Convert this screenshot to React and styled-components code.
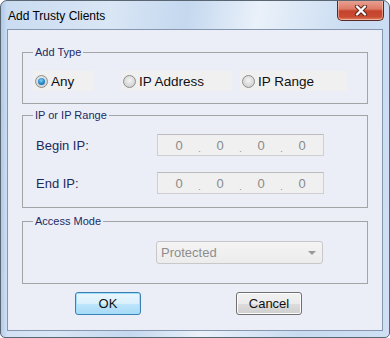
import React from 'react';
import styled, { createGlobalStyle } from 'styled-components';

const GlobalStyle = createGlobalStyle`
  html, body {
    margin: 0;
    padding: 0;
    background: #ffffff;
  }
  body {
    font-family: "Liberation Sans", Arial, sans-serif;
  }
`;

// Window frame
const Window = styled.div`
  box-sizing: border-box;
  width: 390px;
  height: 338px;
  border: 1px solid #5b6673;
  border-radius: 7px 7px 5px 5px;
  background:
    linear-gradient(to right, rgba(150,185,225,0.55) 0, rgba(150,185,225,0) 6px),
    linear-gradient(100deg, #c9dbf1 0%, #d9e6f5 25%, #c4d8ef 42%, #eaf1fa 58%, #c8dbf1 80%, #cfe0f4 100%);
  display: flex;
  flex-direction: column;
  overflow: hidden;
`;

const TitleBar = styled.div`
  height: 28px;
  display: flex;
  align-items: flex-start;
  justify-content: space-between;
  padding-left: 7px;
`;

const Title = styled.span`
  align-self: center;
  margin-top: 1px;
  font-size: 12px;
  color: #000;
`;

const CloseButton = styled.div`
  box-sizing: border-box;
  width: 47px;
  height: 21px;
  margin-top: -1px;
  margin-right: 5px;
  border: 1px solid #5a2a22;
  border-top: none;
  border-radius: 0 0 5px 5px;
  background: linear-gradient(#e9a597 0%, #dd7a66 45%, #c5432b 55%, #c94c31 85%, #e08a6c 100%);
  box-shadow: inset 0 0 0 1px rgba(255,220,210,0.5);
  display: flex;
  align-items: center;
  justify-content: center;
`;

const Client = styled.div`
  box-sizing: border-box;
  flex: 1;
  margin: 0 6px 6px 6px;
  border: 1px solid #8596ae;
  background: #ebeef7;
  padding: 16px 14px 0 14px;
  display: flex;
  flex-direction: column;
`;

// Group box
const Group = styled.fieldset`
  margin: ${p => p.$mt || 0}px 0 0 0;
  padding: 0;
  border: 1px solid #a2a4a8;
  min-width: 0;
`;

const Legend = styled.legend`
  margin-left: 10px;
  padding: 0 2px;
  font-size: 11px;
  line-height: 12px;
  color: #1d2a63;
`;

const GroupBody = styled.div`
  padding: ${p => p.$pt}px 0 ${p => p.$pb}px ${p => p.$pl}px;
`;

const RadioRow = styled.div`
  display: flex;
  align-items: center;
`;

const RadioItem = styled.label`
  box-sizing: border-box;
  width: ${p => p.$w}px;
  margin-left: ${p => p.$ml}px;
  height: 20px;
  background: #f0f0f1;
  display: flex;
  align-items: center;
  padding-left: 2px;
  gap: 3px;
  font-size: 13.5px;
  color: #111;
`;

const RadioCircle = styled.span`
  box-sizing: border-box;
  width: 13px;
  height: 13px;
  border-radius: 50%;
  border: 1px solid #8c8e90;
  background: radial-gradient(circle at 50% 40%, #f4f4f4 0%, #d4d4d4 70%, #c8c8c8 100%);
  display: flex;
  align-items: center;
  justify-content: center;
  &::after {
    content: "";
    width: 7px;
    height: 7px;
    border-radius: 50%;
    display: ${p => (p.$checked ? 'block' : 'none')};
    background: radial-gradient(circle at 45% 35%, #7fd2f7 0%, #2a8ccd 50%, #104f8a 100%);
  }
`;

const FieldGrid = styled.div`
  display: grid;
  grid-template-columns: 121px 167px;
  row-gap: 16px;
  align-items: center;
`;

const FieldLabel = styled.span`
  font-size: 13px;
  color: #1d2a5e;
`;

const IpBox = styled.div`
  box-sizing: border-box;
  height: 22px;
  border: 1px solid #cfcfd1;
  border-top-color: #bcbcbe;
  background: #f0f0f0;
  display: flex;
  align-items: center;
  padding-left: 11px;
  font-size: 13px;
  color: #8a8a8a;
`;

const Octet = styled.span`
  width: 20px;
  text-align: center;
`;

const Dot = styled.span`
  width: 21px;
  text-align: center;
  font-size: 9px;
  padding-top: 7px;
`;

const Select = styled.div`
  box-sizing: border-box;
  width: 167px;
  height: 23px;
  margin-left: 133px;
  border: 1px solid #c8c8ca;
  border-radius: 3px;
  background: linear-gradient(#f4f4f4, #ececec);
  display: flex;
  align-items: center;
  justify-content: space-between;
  padding: 0 6px 0 4px;
  font-size: 13px;
  color: #8d8d8d;
`;

const Arrow = styled.span`
  width: 0;
  height: 0;
  border-left: 4px solid transparent;
  border-right: 4px solid transparent;
  border-top: 4px solid #9a9a9a;
`;

const ButtonRow = styled.div`
  display: flex;
  gap: 95px;
  padding-left: 53px;
  margin-top: 8px;
`;

const Button = styled.button`
  box-sizing: border-box;
  width: 66px;
  height: 23px;
  border-radius: 3px;
  font-family: "Liberation Sans", Arial, sans-serif;
  font-size: 13px;
  color: #111;
  padding: 0;
  border: 1px solid ${p => (p.$default ? '#3c7fb1' : '#707070')};
  background: ${p =>
    p.$default
      ? 'linear-gradient(#eaf6fd 0%, #d9f0fc 50%, #bee6fd 51%, #a7d9f5 100%)'
      : 'linear-gradient(#f2f2f2 0%, #ebebeb 50%, #dddddd 51%, #cfcfcf 100%)'};
  box-shadow: inset 0 0 0 1px ${p => (p.$default ? '#9ee0fb' : '#fcfcfc')};
`;

export default function App() {
  return (
    <>
      <GlobalStyle />
      <Window>
        <TitleBar>
          <Title>Add Trusty Clients</Title>
          <CloseButton>
            <svg width="14" height="11" viewBox="0 0 14 11">
              <path d="M3 1.5 L11 9.5 M11 1.5 L3 9.5" stroke="#5a2318" strokeWidth="4.2" strokeLinecap="round" />
              <path d="M3 1.5 L11 9.5 M11 1.5 L3 9.5" stroke="#ffffff" strokeWidth="2.4" strokeLinecap="round" />
            </svg>
          </CloseButton>
        </TitleBar>
        <Client>
          <Group>
            <Legend>Add Type</Legend>
            <GroupBody $pt={13} $pb={12} $pl={10}>
              <RadioRow>
                <RadioItem $w={61} $ml={0}>
                  <RadioCircle $checked />
                  Any
                </RadioItem>
                <RadioItem $w={111} $ml={27}>
                  <RadioCircle />
                  IP Address
                </RadioItem>
                <RadioItem $w={107} $ml={8}>
                  <RadioCircle />
                  IP Range
                </RadioItem>
              </RadioRow>
            </GroupBody>
          </Group>
          <Group $mt={5}>
            <Legend>IP or IP Range</Legend>
            <GroupBody $pt={13} $pb={13} $pl={13}>
              <FieldGrid>
                <FieldLabel>Begin IP:</FieldLabel>
                <IpBox>
                  <Octet>0</Octet><Dot>.</Dot><Octet>0</Octet><Dot>.</Dot>
                  <Octet>0</Octet><Dot>.</Dot><Octet>0</Octet>
                </IpBox>
                <FieldLabel>End IP:</FieldLabel>
                <IpBox>
                  <Octet>0</Octet><Dot>.</Dot><Octet>0</Octet><Dot>.</Dot>
                  <Octet>0</Octet><Dot>.</Dot><Octet>0</Octet>
                </IpBox>
              </FieldGrid>
            </GroupBody>
          </Group>
          <Group $mt={7}>
            <Legend>Access Mode</Legend>
            <GroupBody $pt={14} $pb={19} $pl={0}>
              <Select>
                Protected
                <Arrow />
              </Select>
            </GroupBody>
          </Group>
          <ButtonRow>
            <Button $default>OK</Button>
            <Button>Cancel</Button>
          </ButtonRow>
        </Client>
      </Window>
    </>
  );
}
